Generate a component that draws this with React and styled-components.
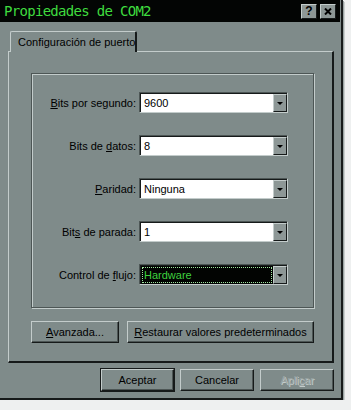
import React from "react";
import styled, { createGlobalStyle } from "styled-components";

const GlobalStyle = createGlobalStyle`
  html, body {
    margin: 0;
    padding: 0;
    background: #eef0f0;
  }
  body {
    font-family: "Liberation Sans", Arial, sans-serif;
    font-size: 11px;
    color: #000;
  }
`;

const face = "#7f8b8a";
const light = "#c3cccb";
const dark = "#161a1a";
const shade = "#4d5655";

const Window = styled.div`
  width: 341px;
  height: 398px;
  background: ${face};
  border-right: 2px solid ${dark};
  border-bottom: 2px solid ${dark};
  box-shadow: 1px 1px 0 #9aa3a2, 2px 2px 0 #c9cfce;
  display: flex;
  flex-direction: column;
`;

const TitleBar = styled.div`
  height: 22px;
  background: #030504;
  display: flex;
  align-items: center;
  padding: 0 4px 0 4px;
  margin-right: 1px;
`;

const Title = styled.div`
  flex: 1;
  font-family: "DejaVu Sans Mono", "Liberation Mono", monospace;
  font-size: 14px;
  letter-spacing: -0.7px;
  color: #3fdc3f;
  line-height: 22px;
`;

const TitleButton = styled.div`
  width: 16px;
  height: 15px;
  box-sizing: border-box;
  margin-left: ${(p) => p.$gap || 0}px;
  background: #8d9796;
  border-top: 1px solid ${light};
  border-left: 1px solid ${light};
  border-right: 1px solid ${dark};
  border-bottom: 1px solid ${dark};
  display: flex;
  align-items: center;
  justify-content: center;
  font-weight: bold;
  font-size: 12px;
  line-height: 1;
`;

const Body = styled.div`
  flex: 1;
  padding: 9px 7px 0 8px;
  display: flex;
  flex-direction: column;
`;

const TabStrip = styled.div`
  display: flex;
  height: 20px;
  position: relative;
  z-index: 1;
`;

const Tab = styled.div`
  width: 127px;
  box-sizing: border-box;
  margin-left: 2px;
  padding: 4px 0 0 7px;
  background: ${face};
  border-top: 1px solid ${light};
  border-left: 1px solid ${light};
  border-right: 2px solid ${dark};
  border-top-left-radius: 2px;
  border-top-right-radius: 2px;
  margin-bottom: -1px;
  white-space: nowrap;
`;

const TabPanel = styled.div`
  height: 312px;
  box-sizing: border-box;
  border-top: 1px solid ${light};
  border-left: 1px solid ${light};
  border-right: 2px solid ${dark};
  border-bottom: 2px solid ${dark};
  padding: 21px 18px 0 22px;
  display: flex;
  flex-direction: column;
`;

const GroupBox = styled.div`
  height: 235px;
  box-sizing: border-box;
  border: 1px solid ${shade};
  box-shadow: inset 1px 1px 0 ${light}, 1px 1px 0 ${light};
  padding: 18px 0 0 0;
  display: grid;
  grid-template-columns: 104px 149px;
  grid-auto-rows: 21px;
  column-gap: 3px;
  row-gap: 22px;
  align-items: center;
`;

const Label = styled.div`
  text-align: right;
  white-space: nowrap;
`;

const U = styled.span`
  text-decoration: underline;
  text-underline-offset: 1px;
`;

const Combo = styled.div`
  height: 21px;
  box-sizing: border-box;
  border-top: 1px solid ${shade};
  border-left: 1px solid ${shade};
  border-right: 1px solid ${light};
  border-bottom: 1px solid ${light};
  display: flex;
`;

const ComboInner = styled.div`
  flex: 1;
  display: flex;
  border-top: 1px solid ${dark};
  border-left: 1px solid ${dark};
  background: ${(p) => (p.$focused ? "#020402" : "#fff")};
  padding: 1px;
`;

const ComboText = styled.div`
  flex: 1;
  display: flex;
  align-items: center;
  padding-left: 2px;
  color: ${(p) => (p.$focused ? "#3fd03f" : "#000")};
  outline: ${(p) => (p.$focused ? "1px dotted #9fe59f" : "none")};
  outline-offset: -1px;
`;

const DropButton = styled.div`
  width: 14px;
  box-sizing: border-box;
  background: #8d9796;
  border-top: 1px solid ${light};
  border-left: 1px solid ${light};
  border-right: 1px solid ${dark};
  border-bottom: 1px solid ${dark};
  display: flex;
  align-items: center;
  justify-content: center;
  margin: -1px -1px -1px 1px;
`;

const Arrow = styled.div`
  width: 0;
  height: 0;
  border-left: 3px solid transparent;
  border-right: 3px solid transparent;
  border-top: 3px solid #000;
  margin-top: 1px;
`;

const ButtonRow = styled.div`
  display: flex;
  gap: 8px;
  margin-top: 13px;
`;

const Footer = styled.div`
  display: flex;
  justify-content: flex-end;
  gap: 6px;
  padding-top: 6px;
`;

const Button = styled.div`
  width: ${(p) => p.$w}px;
  height: 22px;
  box-sizing: border-box;
  border-top: 1px solid ${light};
  border-left: 1px solid ${light};
  border-right: 1px solid ${dark};
  border-bottom: 1px solid ${dark};
  box-shadow: ${(p) =>
    p.$default
      ? `0 0 0 1px ${dark}, inset -1px -1px 0 ${shade}`
      : `inset -1px -1px 0 ${shade}`};
  display: flex;
  align-items: center;
  justify-content: center;
  white-space: nowrap;
  color: ${(p) => (p.$disabled ? "#9aa4a3" : "#000")};
  text-shadow: ${(p) => (p.$disabled ? "1px 1px 0 #c3cccb" : "none")};
`;

const rows = [
  { label: <><U>B</U>its por segundo:</>, value: "9600" },
  { label: <>Bits de <U>d</U>atos:</>, value: "8" },
  { label: <><U>P</U>aridad:</>, value: "Ninguna" },
  { label: <>Bit<U>s</U> de parada:</>, value: "1" },
  { label: <>Control de <U>f</U>lujo:</>, value: "Hardware", focused: true },
];

export default function App() {
  return (
    <>
      <GlobalStyle />
      <Window>
        <TitleBar>
          <Title>Propiedades de COM2</Title>
          <TitleButton>?</TitleButton>
          <TitleButton $gap={3}>
            <svg width="8" height="7" viewBox="0 0 8 7">
              <path d="M1 0.5 L7 6.5 M7 0.5 L1 6.5" stroke="#000" strokeWidth="2" />
            </svg>
          </TitleButton>
        </TitleBar>
        <Body>
          <TabStrip>
            <Tab>Configuración de puerto</Tab>
          </TabStrip>
          <TabPanel>
            <GroupBox>
              {rows.map((r, i) => (
                <React.Fragment key={i}>
                  <Label>{r.label}</Label>
                  <Combo>
                    <ComboInner $focused={r.focused}>
                      <ComboText $focused={r.focused}>{r.value}</ComboText>
                      <DropButton>
                        <Arrow />
                      </DropButton>
                    </ComboInner>
                  </Combo>
                </React.Fragment>
              ))}
            </GroupBox>
            <ButtonRow>
              <Button $w={88}>
                <span><U>A</U>vanzada...</span>
              </Button>
              <Button $w={187}>
                <span><U>R</U>estaurar valores predeterminados</span>
              </Button>
            </ButtonRow>
          </TabPanel>
          <Footer>
            <Button $w={73} $default>Aceptar</Button>
            <Button $w={74}>Cancelar</Button>
            <Button $w={74} $disabled>
              <span>Apli<U>c</U>ar</span>
            </Button>
          </Footer>
        </Body>
      </Window>
    </>
  );
}
